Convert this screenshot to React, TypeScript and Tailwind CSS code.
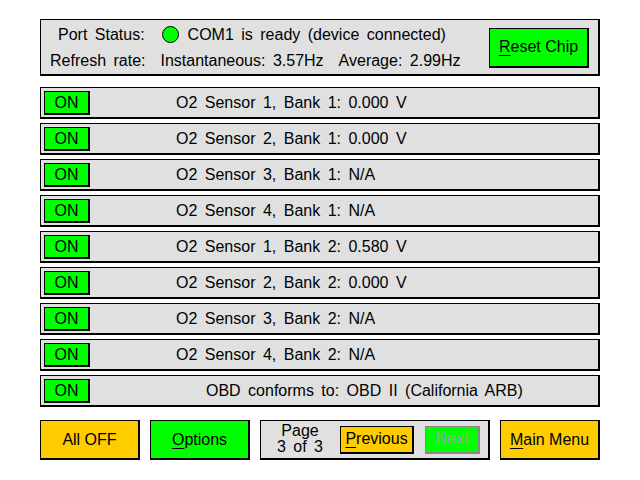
import React from 'react';

const rows = [
  { label: 'O2 Sensor 1, Bank 1: 0.000 V', indent: 'ml-[86px]' },
  { label: 'O2 Sensor 2, Bank 1: 0.000 V', indent: 'ml-[86px]' },
  { label: 'O2 Sensor 3, Bank 1: N/A', indent: 'ml-[86px]' },
  { label: 'O2 Sensor 4, Bank 1: N/A', indent: 'ml-[86px]' },
  { label: 'O2 Sensor 1, Bank 2: 0.580 V', indent: 'ml-[86px]' },
  { label: 'O2 Sensor 2, Bank 2: 0.000 V', indent: 'ml-[86px]' },
  { label: 'O2 Sensor 3, Bank 2: N/A', indent: 'ml-[86px]' },
  { label: 'O2 Sensor 4, Bank 2: N/A', indent: 'ml-[86px]' },
  { label: 'OBD conforms to: OBD II (California ARB)', indent: 'ml-[116px]' },
];

// panels and buttons all share the 1px border with a 2px shadow on right/bottom
const box = 'border border-r-2 border-b-2 border-black';

export default function App() {
  return (
    <div className="w-[640px] h-[480px] bg-white text-black font-['Liberation_Sans',Arial,sans-serif] text-[16px] [word-spacing:3px] leading-none overflow-hidden">
      {/* Status */}
      <div className={`ml-[40px] mt-[19px] w-[560px] h-[57px] bg-[#e0e0e0] ${box} flex items-center`}>
        <div className="flex-1 flex flex-col gap-[10px] pt-[1px]">
          <div className="flex items-center pl-[17px]">
            <span>Port Status:</span>
            <span className="ml-[17px] w-[17px] h-[17px] rounded-full bg-[#00ff00] border border-black" />
            <span className="ml-[9px]">COM1 is ready (device connected)</span>
          </div>
          <div className="flex items-center pl-[9px]">
            <span>Refresh rate:</span>
            <span className="ml-[15px]">Instantaneous: 3.57Hz</span>
            <span className="ml-[15px]">Average: 2.99Hz</span>
          </div>
        </div>
        <button className={`mr-[9px] mt-[1px] w-[100px] h-[40px] bg-[#00ff00] ${box} flex items-center justify-center`}>
          <span><span className="underline underline-offset-[3px]">R</span>eset Chip</span>
        </button>
      </div>

      {/* Sensors */}
      <div className="mt-[11px] flex flex-col gap-[4px]">
        {rows.map((r) => (
          <div key={r.label} className={`ml-[40px] w-[560px] h-[32px] bg-[#e0e0e0] ${box} flex items-center pl-[3px]`}>
            <div className={`w-[46px] h-[24px] bg-[#00ff00] ${box} flex items-center justify-center pt-[1px]`}>ON</div>
            <span className={`${r.indent} pt-[1px]`}>{r.label}</span>
          </div>
        ))}
      </div>

      {/* Bottom buttons */}
      <div className="mt-[13px] ml-[40px] flex gap-[10px]">
        <button className={`w-[100px] h-[40px] bg-[#ffcc00] ${box} flex items-center justify-center`}>All OFF</button>
        <button className={`w-[100px] h-[40px] bg-[#00ff00] ${box} flex items-center justify-center`}>
          <span><span className="underline underline-offset-[3px]">O</span>ptions</span>
        </button>
        <div className={`w-[230px] h-[40px] bg-[#e0e0e0] ${box} flex items-center pl-[9px]`}>
          <div className="w-[62px] flex flex-col items-center leading-[16px] -mt-[1px] pr-[2px]">
            <span>Page</span>
            <span>3 of 3</span>
          </div>
          <button className={`ml-[8px] w-[74px] h-[28px] bg-[#ffcc00] ${box} flex items-center justify-center`}>
            <span><span className="underline underline-offset-[3px]">P</span>revious</span>
          </button>
          <button className="ml-[11px] w-[55px] h-[28px] bg-[#00ff00] border border-r-2 border-b-2 border-[#888888] text-[#a0a0a0] flex items-center justify-center">
            <span>Ne<span className="underline underline-offset-[3px]">x</span>t</span>
          </button>
        </div>
        <button className={`w-[100px] h-[40px] bg-[#ffcc00] ${box} flex items-center justify-center`}>
          <span><span className="underline underline-offset-[3px]">M</span>ain Menu</span>
        </button>
      </div>
    </div>
  );
}
